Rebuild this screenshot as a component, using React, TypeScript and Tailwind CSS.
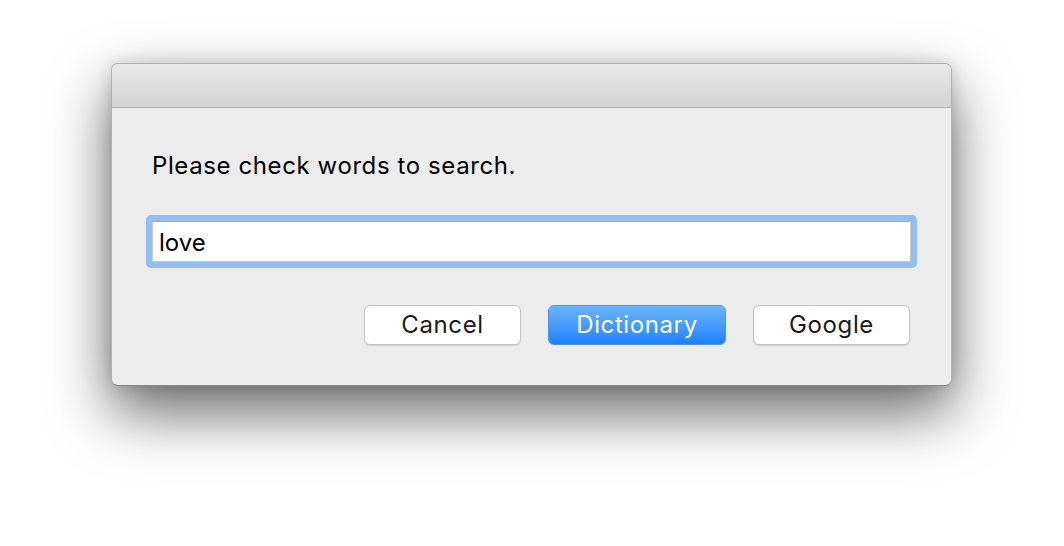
export default function App() {
    return (
        <div
            className="w-[1064px] h-[546px] bg-white pt-[63px] pl-[111px]"
            style={{ fontFamily: 'Inter, "Liberation Sans", Arial, sans-serif' }}
        >
            <div className="w-[841px] h-[323px] flex flex-col rounded-[7px] border border-[#b0b0b0] border-b-[#8a8a8a] bg-[#ececec] overflow-hidden shadow-[0_26px_60px_rgba(0,0,0,0.6),0_0_16px_rgba(0,0,0,0.15)]">
                {/* 타이틀 바 */}
                <div className="h-[44px] shrink-0 bg-gradient-to-b from-[#e9e9e9] to-[#d2d2d2] border-b border-[#b3b3b3]" />

                <div className="flex flex-col px-[34px] pt-[43px]">
                    <p className="text-[24px] leading-[30px] tracking-[0.6px] text-black pl-[6px]">
                        Please check words to search.
                    </p>

                    <div className="mt-[34px] rounded-[5px] bg-[#93bff0] p-[6px]">
                        <div className="h-[41px] bg-white border border-[#c9c9c9] border-t-[#a9a9a9] flex items-center pl-[6px] pt-[3px] text-[24px] text-black">
                            love
                        </div>
                    </div>

                    <div className="mt-[37px] flex justify-end gap-[27px] pr-[7px] text-[24px] tracking-[0.6px]">
                        <button className="w-[157px] h-[40px] rounded-[6px] bg-white border border-[#c4c4c4] shadow-[0_1px_1px_rgba(0,0,0,0.12)] text-[#1a1a1a]">
                            Cancel
                        </button>
                        <button className="w-[178px] h-[40px] rounded-[6px] bg-gradient-to-b from-[#6cb3fa] to-[#1a82fb] border border-[#4a95f0] text-white">
                            Dictionary
                        </button>
                        <button className="w-[157px] h-[40px] rounded-[6px] bg-white border border-[#c4c4c4] shadow-[0_1px_1px_rgba(0,0,0,0.12)] text-[#1a1a1a]">
                            Google
                        </button>
                    </div>
                </div>
            </div>
        </div>
    );
}
